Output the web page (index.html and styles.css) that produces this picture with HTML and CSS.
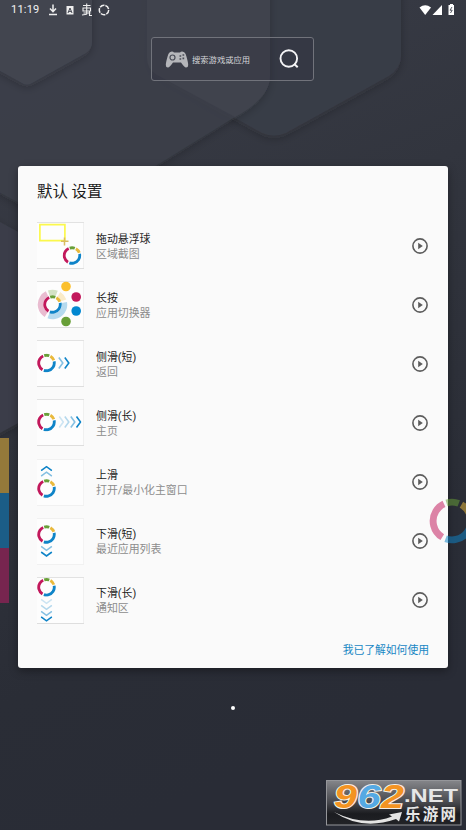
FILE: index.html
```html
<!DOCTYPE html>
<html lang="zh-CN">
<head>
    <meta charset="UTF-8">
    <meta name="viewport" content="width=device-width, initial-scale=1.0">
    <title>默认 设置</title>
    <link rel="stylesheet" href="styles.css">
</head>
<body>
    <!-- Shared icons -->
    <svg class="defs" width="0" height="0">
        <symbol id="ring" viewBox="0 0 20 20">
            <g fill="none" stroke-width="3">
                <circle cx="10" cy="10" r="8.2" pathLength="360" stroke="#c2185b" stroke-dasharray="124 236" transform="rotate(121 10 10)"/>
                <circle cx="10" cy="10" r="8.2" pathLength="360" stroke="#689f38" stroke-dasharray="38 322" transform="rotate(253 10 10)"/>
                <circle cx="10" cy="10" r="8.2" pathLength="360" stroke="#e9b93c" stroke-dasharray="40 320" transform="rotate(300 10 10)"/>
                <circle cx="10" cy="10" r="8.2" pathLength="360" stroke="#0f84c8" stroke-dasharray="122 238" transform="rotate(-12 10 10)"/>
            </g>
        </symbol>
        <symbol id="chevron" viewBox="0 0 6 12">
            <path d="M.8 .6 4.8 6 .8 11.4" fill="none" stroke="#0f84c8" stroke-width="1.6"/>
        </symbol>
        <symbol id="play" viewBox="0 0 16 16">
            <circle cx="8" cy="8" r="7.1" fill="none" stroke="#5c5c5c" stroke-width="1.6"/>
            <path d="M6.2 4.7v6.6L10.8 8z" fill="#5c5c5c"/>
        </symbol>
    </svg>

    <div class="screen">
        <!-- Wallpaper -->
        <svg class="wallpaper" viewBox="0 0 466 830">
            <defs>
                <linearGradient id="sky" x1="0" y1="0" x2=".25" y2="1">
                    <stop offset="0" stop-color="#3a3d48"/>
                    <stop offset=".4" stop-color="#32353e"/>
                    <stop offset=".8" stop-color="#2a2d36"/>
                    <stop offset="1" stop-color="#292c36"/>
                </linearGradient>
                <filter id="soft" x="-20%" y="-20%" width="140%" height="140%">
                    <feDropShadow dx="0" dy="3" stdDeviation="4" flood-color="#1d1f28" flood-opacity=".25"/>
                </filter>
            </defs>
            <rect width="466" height="830" fill="url(#sky)"/>
            <path d="M147-20V58Q147 69 157 75L262 133Q274 138 286 133L389 76Q401 68 401 56V-20z" fill="#393c47" filter="url(#soft)"/>
            <path d="M-20-20V182L60 225 235 117Q270 98 270 76V-20z" fill="#3b3f49" fill-opacity=".85" filter="url(#soft)"/>
            <path d="M147 0H270V76Q270 98 235 117L157 75Q147 69 147 58z" fill="#40434d"/>
            <path d="M-20-20V60L22 83Q27 86 32 83L86 53Q92 49 92 42V-20z" fill="#424550" filter="url(#soft)"/>
            <path d="M-20 212 0 222 60 255V400L0 433-20 443z" fill="#3b3e49" filter="url(#soft)"/>
        </svg>

        <div class="status-bar">
            <span class="clock">11:19</span>
            <svg class="status-icons" width="62" height="14" viewBox="0 0 62 14">
                <path d="M5 1.500v7M2 5.500l3 3.200L8 5.500M1 11.500h8" fill="none" stroke="#eee" stroke-width="1.5"/>
                <path d="M18.500 3h7v8.500h-7z" fill="#eee"/>
                <path d="M20 10l2-5 2 5M20.700 8.400h2.600" fill="none" stroke="#444751"/>
                <path d="M35 2.500h7.500M35 5v3h7.500v-3zM38.700 .5v11M34 12l4.700-.8M41.500 8v4.500h2.500M35.500 10h7" fill="none" stroke="#eee" stroke-width="1.100"/>
                <circle cx="56" cy="7" r="4.700" fill="none" stroke="#eee" stroke-width="1.500" pathLength="36" stroke-dasharray="6 1.200"/>
            </svg>
            <svg class="signal-icons" width="37" height="12" viewBox="0 0 37 12">
                <path d="M.5 3.500Q6.200-1 12 3.500L6.200 11z" fill="#fff"/>
                <path d="M13.500 11 23 1v10z" fill="#fff"/>
                <path d="M31 1V0h3v1h1v10h-5.500V1z" fill="#fff"/>
                <path d="M33 3l-2 3.200h2.200L31.500 9" fill="none" stroke="#454852" stroke-width=".9"/>
            </svg>
        </div>

        <div class="search">
            <svg class="gamepad" width="24" height="17" viewBox="0 0 24 17">
                <path d="M6 .7Q8 .3 9 1.500h6Q16 .3 18 .7q2.500.5 3.500 5 1.700 6 1.700 8.300 0 2.600-2.200 2.500-1.500 0-5-5H8q-3.500 5-5 5Q.8 16.600.8 14q0-2.300 1.700-8.300Q3.500 1.200 6 .7z" fill="#b5b6ba"/>
                <circle cx="7.500" cy="6.500" r="2.500" fill="none" stroke="#4a4d57" stroke-width="1.200"/>
                <path d="M14.500 5h1.700M17.500 4h1.700M14.500 8h1.700M17.500 7.300h1.700" stroke="#4a4d57" stroke-width="1.700"/>
            </svg>
            <span class="search-text">搜索游戏或应用</span>
            <svg class="magnifier" width="20" height="20" viewBox="0 0 20 20">
                <circle cx="9.800" cy="9.500" r="8.300" fill="none" stroke="#f4f4f6" stroke-width="1.900"/>
                <path d="M15 14.700l3.700 3.600" stroke="#f4f4f6" stroke-width="2"/>
            </svg>
        </div>

        <div class="dialog">
            <h1 class="dialog-title">默认 设置</h1>
            <div class="row">
                <svg class="thumb" viewBox="0 0 47 47">
                    <path d="M2.900 2.700h25v16h-25z" fill="none" stroke="#fbf84d" stroke-width="1.700"/>
                    <path d="M27.500 15.500v8M24 19.300h7.500" stroke="#d9bd60" stroke-width="1.500"/>
                    <use href="#ring" x="25.500" y="24" width="19" height="19"/>
                </svg>
                <div class="label"><div class="name">拖动悬浮球</div><div class="action">区域截图</div></div>
                <svg class="play"><use href="#play"/></svg>
            </div>
            <div class="row">
                <svg class="thumb" viewBox="0 0 47 47">
                    <g fill="none" stroke-width="5.500">
                        <circle cx="15.500" cy="23.500" r="12" pathLength="360" stroke="#e9bcd0" stroke-dasharray="121 239" transform="rotate(122 15.500 23.500)"/>
                        <circle cx="15.500" cy="23.500" r="12" pathLength="360" stroke="#d3e2c5" stroke-dasharray="39 321" transform="rotate(252 15.500 23.500)"/>
                        <circle cx="15.500" cy="23.500" r="12" pathLength="360" stroke="#faebc8" stroke-dasharray="38 322" transform="rotate(302 15.500 23.500)"/>
                        <circle cx="15.500" cy="23.500" r="12" pathLength="360" stroke="#b5daef" stroke-dasharray="120 240" transform="rotate(-10 15.500 23.500)"/>
                    </g>
                    <use href="#ring" x="6" y="14" width="19" height="19"/>
                    <circle cx="29" cy="5.500" r="4.800" fill="#fbc02d"/>
                    <circle cx="39.200" cy="16" r="4.800" fill="#c2185b"/>
                    <circle cx="39.200" cy="30" r="4.800" fill="#0288d1"/>
                    <circle cx="29" cy="40.500" r="4.800" fill="#689f38"/>
                </svg>
                <div class="label"><div class="name">长按</div><div class="action">应用切换器</div></div>
                <svg class="play"><use href="#play"/></svg>
            </div>
            <div class="row">
                <svg class="thumb" viewBox="0 0 47 47">
                    <use href="#ring" x="0" y="13.500" width="19" height="19"/>
                    <use href="#chevron" x="21" y="17" width="6" height="12" opacity=".5"/>
                    <use href="#chevron" x="27" y="17" width="6" height="12"/>
                </svg>
                <div class="label"><div class="name">侧滑(短)</div><div class="action">返回</div></div>
                <svg class="play"><use href="#play"/></svg>
            </div>
            <div class="row">
                <svg class="thumb" viewBox="0 0 47 47">
                    <use href="#ring" x="0" y="13.500" width="19" height="19"/>
                    <use href="#chevron" x="21.500" y="17" width="6" height="12" opacity=".2"/>
                    <use href="#chevron" x="27" y="17" width="6" height="12" opacity=".3"/>
                    <use href="#chevron" x="33" y="17" width="6" height="12" opacity=".5"/>
                    <use href="#chevron" x="38.700" y="17" width="6" height="12"/>
                </svg>
                <div class="label"><div class="name">侧滑(长)</div><div class="action">主页</div></div>
                <svg class="play"><use href="#play"/></svg>
            </div>
            <div class="row">
                <svg class="thumb faint" viewBox="0 0 47 47">
                    <g transform="translate(3.500 12.500) rotate(-90)">
                        <use href="#chevron" width="6" height="12"/>
                        <use href="#chevron" x="-5.500" width="6" height="12" opacity=".5"/>
                    </g>
                    <use href="#ring" x="0" y="20" width="19" height="19"/>
                </svg>
                <div class="label"><div class="name">上滑</div><div class="action">打开/最小化主窗口</div></div>
                <svg class="play"><use href="#play"/></svg>
            </div>
            <div class="row">
                <svg class="thumb faint" viewBox="0 0 47 47">
                    <use href="#ring" x="0" y="7" width="19" height="19"/>
                    <g transform="translate(15.500 27.500) rotate(90)">
                        <use href="#chevron" width="6" height="12" opacity=".5"/>
                        <use href="#chevron" x="5.700" width="6" height="12"/>
                    </g>
                </svg>
                <div class="label"><div class="name">下滑(短)</div><div class="action">最近应用列表</div></div>
                <svg class="play"><use href="#play"/></svg>
            </div>
            <div class="row">
                <svg class="thumb" viewBox="0 0 47 47">
                    <use href="#ring" x="0" y=".8" width="19" height="19"/>
                    <g transform="translate(15.500 21.500) rotate(90)">
                        <use href="#chevron" width="6" height="12" opacity=".2"/>
                        <use href="#chevron" x="6" width="6" height="12" opacity=".3"/>
                        <use href="#chevron" x="12" width="6" height="12" opacity=".5"/>
                        <use href="#chevron" x="17.500" width="6" height="12"/>
                    </g>
                </svg>
                <div class="label"><div class="name">下滑(长)</div><div class="action">通知区</div></div>
                <svg class="play"><use href="#play"/></svg>
            </div>
            <div class="dialog-footer">
                <a class="confirm">我已了解如何使用</a>
            </div>
        </div>

        <div class="page-dot"></div>

        <!-- Overlays -->
        <div class="edge-bar">
            <div class="edge edge-yellow"></div>
            <div class="edge edge-blue"></div>
            <div class="edge edge-pink"></div>
        </div>
        <svg class="floating-ball"><use href="#ring"/></svg>

        <svg class="watermark" width="136" height="46" viewBox="0 0 136 46">
            <defs>
                <linearGradient id="plate" x1="0" y1="0" x2="0" y2="1">
                    <stop offset="0" stop-color="#85868a"/>
                    <stop offset=".5" stop-color="#46474c"/>
                    <stop offset=".75" stop-color="#1b1c20"/>
                    <stop offset="1" stop-color="#222327"/>
                </linearGradient>
            </defs>
            <rect x=".5" y=".5" width="134.500" height="44.500" fill="url(#plate)" stroke="#95969a"/>
            <path d="M8 32Q38 47 66 36.500L63 34.500 76 32 73 41.500 70 39Q36 51 8 32z" fill="#e4e4e4"/>
            <g class="mark-digits">
                <text x="8" y="28" textLength="23" lengthAdjust="spacingAndGlyphs" fill="#f39322">9</text>
                <text x="31.500" y="28" textLength="23" lengthAdjust="spacingAndGlyphs" fill="#55a9e3">6</text>
                <text x="55" y="28" textLength="23" lengthAdjust="spacingAndGlyphs" fill="#f39322">2</text>
            </g>
            <text class="mark-net" x="78" y="22" textLength="54" lengthAdjust="spacingAndGlyphs">.NET</text>
            <text class="mark-cn" x="79" y="40" textLength="51">乐游网</text>
        </svg>
    </div>
</body>
</html>
```
FILE: styles.css
```css
body {
    margin: 0;
    font-family: Roboto, "Noto Sans CJK SC", sans-serif;
    background-color: #2b2e37;
}

.defs {
    position: absolute;
}

.screen {
    position: relative;
    display: flex;
    flex-direction: column;
    align-items: center;
    width: 466px;
    height: 830px;
    overflow: hidden;
}

/* Everything else is drawn over the wallpaper */
.wallpaper {
    position: absolute;
    top: 0;
    left: 0;
    width: 466px;
    height: 830px;
}

.status-bar {
    position: relative;
    box-sizing: border-box;
    display: flex;
    align-items: center;
    width: 100%;
    height: 19px;
    padding: 0 10px 0 11px;
}

.clock {
    width: 37px;
    font-size: 11px;
    letter-spacing: 0.2px;
    color: #f2f2f2;
}

.signal-icons {
    margin-left: auto;
}

/* Search box */
.search {
    position: relative;
    box-sizing: border-box;
    display: flex;
    align-items: center;
    width: 163px;
    height: 44px;
    margin-top: 18px;
    margin-right: 1px;
    padding: 0 14px 0 13px;
    border: 1px solid #71737b;
    border-radius: 3px;
    background-color: rgba(45, 45, 60, 0.25);
}

.search-text {
    margin-left: 3px;
    font-size: 8.300px;
    color: #d5d6d9;
}

.magnifier {
    margin-left: auto;
}

/* Dialog */
.dialog {
    position: relative;
    box-sizing: border-box;
    width: 430px;
    height: 502px;
    margin-top: 85px;
    padding: 0 19px;
    border-radius: 3px;
    background-color: #fafafa;
    box-shadow: 0 3px 9px rgba(0, 0, 0, 0.35);
}

.dialog-title {
    height: 50px;
    margin: 0;
    font-size: 15.400px;
    font-weight: 400;
    line-height: 52px;
    color: #1b1b1b;
}

.row {
    display: flex;
    align-items: center;
    height: 59.150px;
}

.thumb {
    box-sizing: border-box;
    width: 47px;
    height: 47px;
    background-color: #fdfdfd;
    box-shadow: inset 0 -1px 0 #dedede, inset 0 1px 0 #e2e2e2, inset -1px 0 0 #f0f0f0;
}

.thumb.faint {
    box-shadow: inset 0 -1px 0 #f1f1f1, inset 0 1px 0 #f1f1f1, inset -1px 0 0 #f3f3f3;
}

.label {
    flex: 1;
    margin-left: 12px;
    padding-top: 2px;
    font-size: 10.900px;
    line-height: 15px;
}

.name {
    color: #1d1d1d;
}

.action {
    color: #8c8c8c;
}

.play {
    width: 16px;
    height: 16px;
    margin-right: 1px;
}

.dialog-footer {
    display: flex;
    justify-content: flex-end;
    margin-top: 13px;
}

.confirm {
    font-size: 10.800px;
    line-height: 16px;
    color: #1787c4;
}

.page-dot {
    position: relative;
    width: 4px;
    height: 4px;
    margin-top: 38px;
    border-radius: 50%;
    background-color: #fff;
}

/* Colour strips on the left edge */
.edge-bar {
    position: absolute;
    top: 438px;
    left: 0;
    width: 9px;
}

.edge {
    height: 55px;
}

.edge-yellow {
    background-color: #94793a;
}

.edge-blue {
    background-color: #1b5d87;
}

.edge-pink {
    background-color: #77254f;
}

.floating-ball {
    position: absolute;
    top: 498px;
    left: 429px;
    width: 46px;
    height: 46px;
    opacity: 0.52;
}

.watermark {
    position: absolute;
    top: 780px;
    left: 326px;
    overflow: visible;
}

.mark-digits {
    font-family: "Liberation Sans", Arial, sans-serif;
    font-size: 34px;
    font-style: italic;
    font-weight: 700;
    stroke: #f5efe6;
    stroke-width: 2px;
    paint-order: stroke;
}

.mark-net {
    font-family: "Liberation Sans", Arial, sans-serif;
    font-size: 17.500px;
    font-weight: 700;
    fill: #e6e6e6;
}

.mark-cn {
    font-family: "Noto Sans CJK SC", sans-serif;
    font-size: 15.500px;
    font-weight: 700;
    fill: #e6e6e6;
}
```
